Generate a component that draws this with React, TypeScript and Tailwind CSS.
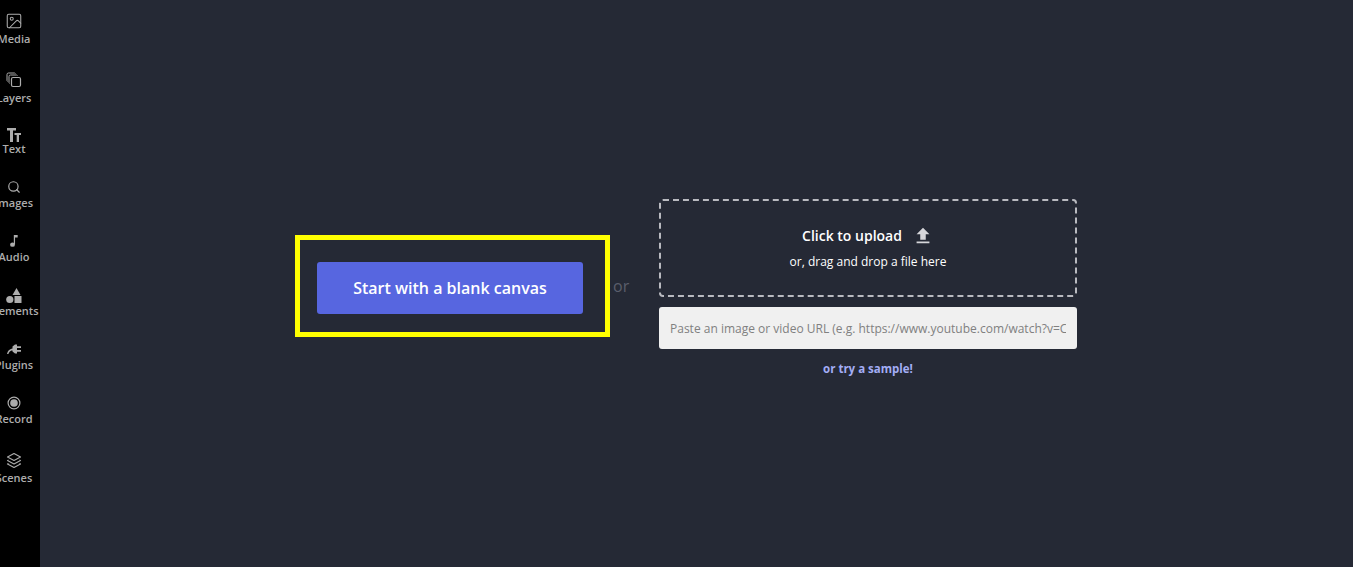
import { Image, Search } from 'lucide-react';
import { MdFileUpload } from 'react-icons/md';
import type { ReactNode } from 'react';

const CopiesIcon = () => (
  <svg viewBox="0 0 16 16" className="w-4 h-4" fill="none" stroke="currentColor" strokeWidth="1">
    <rect x="5.5" y="5.5" width="9" height="9" rx="1.5" strokeWidth="1.2" />
    <path d="M3.5 11.5 A1.5 1.5 0 0 1 3 10.5 V4.5 A1.5 1.5 0 0 1 4.5 3 H10.5 A1.5 1.5 0 0 1 11.5 3.5" />
    <path d="M1.5 9.5 A1.5 1.5 0 0 1 1 8.5 V2.5 A1.5 1.5 0 0 1 2.5 1 H8.5 A1.5 1.5 0 0 1 9.5 1.5" />
  </svg>
);

const TextSizeIcon = () => (
  <svg viewBox="0 0 16 16" className="w-4 h-4" fill="currentColor">
    <path d="M1 1 H10 V3.6 H7 V15 H4 V3.6 H1 Z" />
    <path d="M8.5 6 H15 V8 H13 V15 H10.7 V8 H8.5 Z" />
  </svg>
);

const NoteIcon = () => (
  <svg viewBox="0 0 16 16" className="w-[14px] h-[14px]" fill="currentColor">
    <ellipse cx="6.3" cy="12.2" rx="2.8" ry="2.5" />
    <path d="M7.8 12 V1 H12.2 V4 H9.2 V12 Z" />
  </svg>
);

const ShapesIcon = () => (
  <svg viewBox="0 0 16 16" className="w-4 h-4" fill="currentColor">
    <path d="M10.5 0 L14.5 7 H6.5 Z" />
    <circle cx="3.8" cy="11.5" r="3.6" />
    <rect x="8.5" y="8" width="7" height="7" />
  </svg>
);

const PlugIcon = () => (
  <svg viewBox="0 0 16 16" className="w-4 h-4" fill="currentColor">
    <path d="M1 13 C1.6 10.2 3.2 8.4 5.5 7.8 L6.5 7.6 V5.5 L9 3.5 H11 V5.2 H15 V6.9 H11 V9.1 H15 V10.8 H11 V12.5 H9 L6.5 10.5 V9.4 L5.6 9.6 C4.2 10 3 11.2 2.4 13 Z" />
  </svg>
);

const RecordIcon = () => (
  <svg viewBox="0 0 16 16" className="w-4 h-4" fill="currentColor">
    <path
      fillRule="evenodd"
      d="M8 1.5 A6.5 6.5 0 1 1 8 14.5 A6.5 6.5 0 1 1 8 1.5 Z M8 2.7 A5.3 5.3 0 1 0 8 13.3 A5.3 5.3 0 1 0 8 2.7 Z"
    />
    <circle cx="8" cy="8" r="3.8" />
  </svg>
);

const StackIcon = () => (
  <svg viewBox="0 0 16 16" className="w-4 h-4" fill="none" stroke="currentColor" strokeWidth="1.1" strokeLinejoin="round">
    <path d="M8 1.5 L14.5 5 L8 8.5 L1.5 5 Z" />
    <path d="M2.5 8 L1.5 8.6 L8 12 L14.5 8.6 L13.5 8" />
    <path d="M2.5 11.4 L1.5 12 L8 15.5 L14.5 12 L13.5 11.4" />
  </svg>
);

const sidebarItems: { label: string; icon: ReactNode; itemClass: string; gapClass: string }[] = [
  { label: 'Media', icon: <Image className="w-[18px] h-[18px]" strokeWidth={1.4} />, itemClass: 'mt-[13px]', gapClass: 'mt-[3px]' },
  { label: 'Layers', icon: <CopiesIcon />, itemClass: 'mt-[26px]', gapClass: 'mt-[3px]' },
  { label: 'Text', icon: <TextSizeIcon />, itemClass: 'mt-[22px]', gapClass: 'mt-[-1px]' },
  { label: 'Images', icon: <Search className="w-[14px] h-[14px]" strokeWidth={2} />, itemClass: 'mt-[23px]', gapClass: 'mt-[1px]' },
  { label: 'Audio', icon: <NoteIcon />, itemClass: 'mt-[23px]', gapClass: 'mt-[1px]' },
  { label: 'Elements', icon: <ShapesIcon />, itemClass: 'mt-[24px]', gapClass: 'mt-[0px]' },
  { label: 'Plugins', icon: <PlugIcon />, itemClass: 'mt-[23px]', gapClass: 'mt-[1px]' },
  { label: 'Record', icon: <RecordIcon />, itemClass: 'mt-[23px]', gapClass: 'mt-[1px]' },
  { label: 'Scenes', icon: <StackIcon />, itemClass: 'mt-[26px]', gapClass: 'mt-[3px]' },
];

export default function App() {
  return (
    <div
      className="flex h-[567px] w-full overflow-hidden bg-[#252935]"
      style={{ fontFamily: '"Open Sans", sans-serif' }}
    >
      <aside className="w-10 shrink-0 bg-black overflow-hidden text-[#adadad]">
        <div className="w-[28px] flex flex-col items-center">
          {sidebarItems.map((item) => (
            <div key={item.label} className={`flex flex-col items-center ${item.itemClass}`}>
              <div className="h-4 flex items-center justify-center">{item.icon}</div>
              <span className={`text-[11px] leading-[14px] font-semibold whitespace-nowrap ${item.gapClass}`}>
                {item.label}
              </span>
            </div>
          ))}
        </div>
      </aside>

      <main className="flex-1 flex items-start pl-[255px] pt-[199px]">
        <div className="mt-[36px] w-[315px] h-[102px] shrink-0 border-[5px] border-[#ffff00] pl-[17px] pt-[22px]">
          <button className="w-[266px] h-[52px] rounded-[3px] bg-[#5766e0] text-white text-base font-semibold">
            Start with a blank canvas
          </button>
        </div>

        <span className="mt-[76px] ml-[3px] w-[46px] shrink-0 text-base leading-[22px] text-[#5a5e6b]">or</span>

        <div className="w-[418px] shrink-0 flex flex-col items-center">
          <div className="w-full h-[98px] rounded-[4px] border-2 border-dashed border-[#b9bac0] flex flex-col items-center pt-[24px]">
            <div className="flex items-center text-white text-sm font-semibold leading-5">
              Click to upload
              <MdFileUpload className="w-[22px] h-[22px] ml-[10px] text-[#d6d6da]" />
            </div>
            <p className="mt-[7px] text-white text-xs leading-4 font-normal">or, drag and drop a file here</p>
          </div>
          <input
            readOnly
            placeholder="Paste an image or video URL (e.g. https://www.youtube.com/watch?v=C"
            className="mt-[10px] w-full h-[42px] rounded-[3px] bg-[#f0f0f0] px-[11px] text-xs text-[#555] placeholder:text-[#808080] outline-none"
          />
          <a className="mt-[12px] text-[#a3adf5] text-[11.5px] leading-4 font-bold">or try a sample!</a>
        </div>
      </main>
    </div>
  );
}
